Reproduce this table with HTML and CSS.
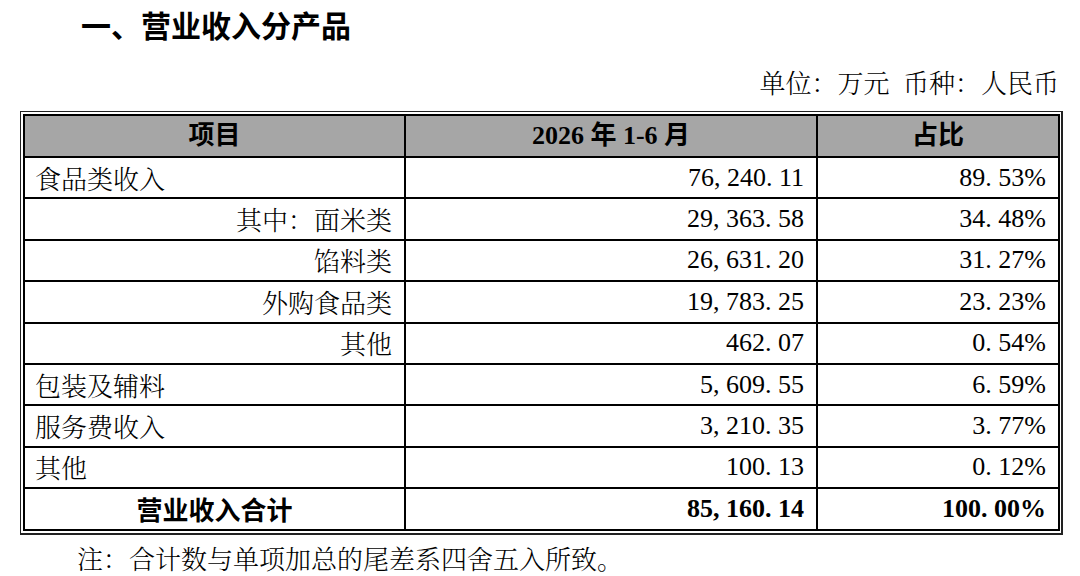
FILE: index.html
```html
<!DOCTYPE html>
<html lang="zh-CN">
<head>
<meta charset="utf-8">
<title>营业收入分产品</title>
<link rel="stylesheet" href="styles.css">
</head>
<body>
<h1 class="title">一、营业收入分产品</h1>
<div class="unit">单位：万元&nbsp;&nbsp;币种：人民币</div>
<div class="frame">
  <table class="grid">
    <colgroup>
      <col class="c1"><col class="c2"><col class="c3">
    </colgroup>
    <thead>
      <tr class="head">
        <th>项目</th>
        <th>2026 年 1-6 月</th>
        <th>占比</th>
      </tr>
    </thead>
    <tbody>
      <tr><td class="name">食品类收入</td><td class="num">76<span class="p">,</span>240<span class="p">.</span>11</td><td class="num">89<span class="p">.</span>53%</td></tr>
      <tr><td class="sub">其中：面米类</td><td class="num">29<span class="p">,</span>363<span class="p">.</span>58</td><td class="num">34<span class="p">.</span>48%</td></tr>
      <tr><td class="sub">馅料类</td><td class="num">26<span class="p">,</span>631<span class="p">.</span>20</td><td class="num">31<span class="p">.</span>27%</td></tr>
      <tr><td class="sub">外购食品类</td><td class="num">19<span class="p">,</span>783<span class="p">.</span>25</td><td class="num">23<span class="p">.</span>23%</td></tr>
      <tr><td class="sub">其他</td><td class="num">462<span class="p">.</span>07</td><td class="num">0<span class="p">.</span>54%</td></tr>
      <tr><td class="name">包装及辅料</td><td class="num">5<span class="p">,</span>609<span class="p">.</span>55</td><td class="num">6<span class="p">.</span>59%</td></tr>
      <tr><td class="name">服务费收入</td><td class="num">3<span class="p">,</span>210<span class="p">.</span>35</td><td class="num">3<span class="p">.</span>77%</td></tr>
      <tr><td class="name">其他</td><td class="num">100<span class="p">.</span>13</td><td class="num">0<span class="p">.</span>12%</td></tr>
      <tr class="total"><td class="center">营业收入合计</td><td class="num">85<span class="p">,</span>160<span class="p">.</span>14</td><td class="num">100<span class="p">.</span>00%</td></tr>
    </tbody>
  </table>
</div>
<p class="note">注：合计数与单项加总的尾差系四舍五入所致。</p>
</body>
</html>
```

FILE: styles.css
```css
html, body {
  margin: 0;
  padding: 0;
  background: #fff;
}
body {
  width: 1080px;
  color: #000;
  font-family: "Liberation Serif", "Noto Serif CJK SC", "Noto Sans CJK SC", serif;
  font-size: 26px;
}
.title {
  margin: 4px 0 0 0;
  padding-left: 81px;
  height: 40px;
  line-height: 40px;
  font-size: 30px;
  font-weight: bold;
  font-family: "Noto Sans CJK SC", sans-serif;
}
.unit {
  margin-top: 20px;
  height: 36px;
  line-height: 36px;
  text-align: right;
  padding-right: 21px;
  font-family: "Noto Serif CJK SC", "Noto Sans CJK SC", serif;
  font-weight: 300;
}
.frame {
  margin: 11px 0 0 20px;
  width: 1036px;
  border: 1px solid #222;
  border-right-width: 2px;
  border-bottom-width: 2px;
  padding: 2px;
}
.grid {
  width: 100%;
  border-collapse: collapse;
  table-layout: fixed;
  border: 2px solid #000;
}
.c1 { width: 381px; }
.c2 { width: 412px; }
.c3 { width: 242px; }
.grid th, .grid td {
  border: 2px solid #000;
  height: 39.4px;
  padding: 0;
  line-height: 30px;
  white-space: nowrap;
}
.head th {
  height: 40px;
  background: #a6a6a6;
  font-weight: bold;
  text-align: center;
  font-family: "Liberation Serif", "Noto Sans CJK SC", serif;
}
.name {
  text-align: left;
  padding-left: 10px !important;
  font-family: "Noto Serif CJK SC", "Noto Sans CJK SC", serif;
  font-weight: 300;
}
.sub {
  text-align: right;
  padding-right: 12px !important;
  font-family: "Noto Serif CJK SC", "Noto Sans CJK SC", serif;
  font-weight: 300;
}
.center {
  text-align: center;
  font-family: "Noto Sans CJK SC", sans-serif;
  font-weight: bold;
}
.num {
  text-align: right;
  padding-right: 12px !important;
}
.p {
  display: inline-block;
  width: 0.5em;
  text-align: left;
}
.total .num {
  font-weight: bold;
}
.note {
  margin: 5px 0 0 0;
  padding-left: 77px;
  height: 36px;
  line-height: 36px;
  font-family: "Noto Serif CJK SC", "Noto Sans CJK SC", serif;
  font-weight: 300;
}
```
